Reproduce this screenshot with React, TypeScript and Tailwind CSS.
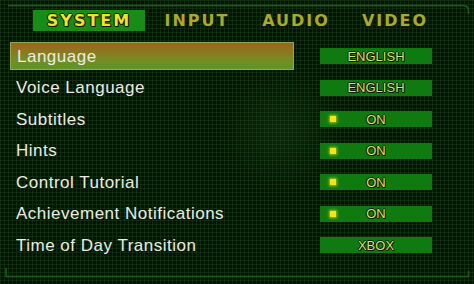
import React from "react";

const tabs = [
  { label: "SYSTEM", w: "w-[112px]", active: true },
  { label: "INPUT", w: "w-[104px]", active: false },
  { label: "AUDIO", w: "w-[94px]", active: false },
  { label: "VIDEO", w: "w-[104px]", active: false },
];

const rows = [
  { label: "Language", value: "ENGLISH", dot: false },
  { label: "Voice Language", value: "ENGLISH", dot: false },
  { label: "Subtitles", value: "ON", dot: true },
  { label: "Hints", value: "ON", dot: true },
  { label: "Control Tutorial", value: "ON", dot: true },
  { label: "Achievement Notifications", value: "ON", dot: true },
  { label: "Time of Day Transition", value: "XBOX", dot: false },
];

const outline =
  "[text-shadow:1px_0_0_#0a1a05,-1px_0_0_#0a1a05,0_1px_0_#0a1a05,0_-1px_0_#0a1a05,1px_1px_0_#0a1a05]";

export default function App() {
  return (
    <div className="relative w-[474px] h-[284px] overflow-hidden bg-[#061206] bg-[linear-gradient(to_right,rgba(30,80,30,0.35)_1px,transparent_1px),linear-gradient(to_bottom,rgba(30,80,30,0.35)_1px,transparent_1px)] bg-[size:4px_4px]">
      {/* faint emblem behind the list */}
      <div className="pointer-events-none absolute left-[215px] top-[60px] w-[130px] h-[140px] rounded-full bg-[radial-gradient(circle_at_center,rgba(40,90,40,0.25)_0%,transparent_70%)]" />

      {/* frame lines */}
      <svg className="pointer-events-none absolute inset-0" width="474" height="284">
        <path d="M8 5.5 H463 Q468.5 5.5 468.5 11 V14" stroke="#1f5c1f" strokeWidth="1.5" fill="none" />
        <path d="M6 268 V276.5 H468.5 V271" stroke="#1f5c1f" strokeWidth="1.5" fill="none" />
      </svg>

      <div className="relative flex flex-col pt-[10px]">
        {/* tabs */}
        <div className="flex pl-[33px] h-[21px]">
          {tabs.map((t) => (
            <div
              key={t.label}
              className={`${t.w} h-[21px] flex items-center justify-center ${t.active ? "bg-[#178c17]" : ""}`}
            >
              <span
                className={`font-['DejaVu_Sans',sans-serif] font-bold text-[16px] tracking-[2px] leading-none ${outline} ${
                  t.active ? "text-[#f2e22a]" : "text-[#a9a92c]"
                }`}
              >
                {t.label}
              </span>
            </div>
          ))}
        </div>

        {/* rows */}
        <div className="flex flex-col gap-[3.5px] mt-[11px]">
          {rows.map((r, i) => (
            <div key={r.label} className="flex items-center h-[28px]">
              <div
                className={`ml-[10px] w-[284px] h-[28px] flex items-center pl-[6px] ${
                  i === 0
                    ? "bg-[linear-gradient(to_bottom,#a0621e,#7a8a22_60%,#5e9626)] border border-[#9aa64a]"
                    : ""
                }`}
              >
                <span className="font-['Liberation_Sans',sans-serif] text-[17px] tracking-[0.5px] text-[#ecece4] leading-none">
                  {r.label}
                </span>
              </div>
              <div className="relative ml-[26px] w-[112px] h-[16px] bg-[#0f7a0f] flex items-center justify-center">
                {r.dot && (
                  <span className="absolute left-[10px] top-[5px] w-[6px] h-[6px] bg-[#f4e41c] shadow-[0_0_3px_1px_rgba(240,220,30,0.7)]" />
                )}
                <span
                  className={`font-['Liberation_Sans',sans-serif] text-[13px] leading-none text-[#d6e26c] ${outline}`}
                >
                  {r.value}
                </span>
              </div>
            </div>
          ))}
        </div>
      </div>
    </div>
  );
}
